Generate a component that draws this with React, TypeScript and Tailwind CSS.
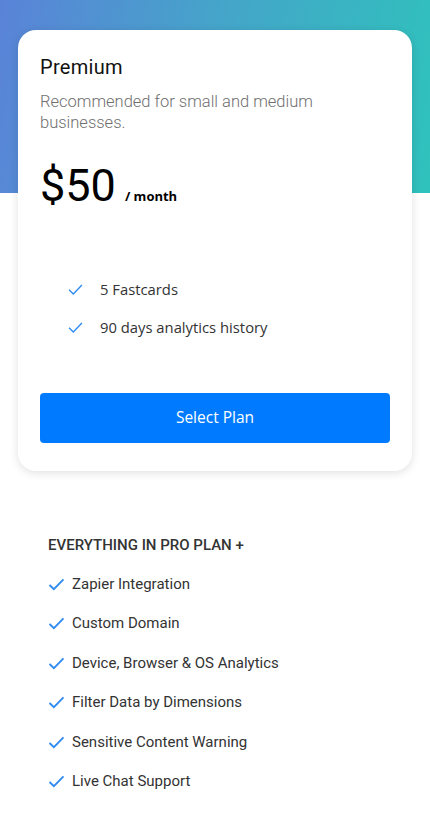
import React from "react";

const CheckThin = ({ className }: { className?: string }) => (
    <svg viewBox="0 0 16 12" className={className} fill="none">
        <path d="M1 6.2L5.6 10.8L15 1" stroke="currentColor" strokeWidth="1.5" />
    </svg>
);

const CheckBold = ({ className }: { className?: string }) => (
    <svg viewBox="0 0 18 14" className={className} fill="none">
        <path d="M1.5 7.5L6.2 12L16.5 1.5" stroke="currentColor" strokeWidth="2" />
    </svg>
);

const App = () => {
    const planFeatures = ["5 Fastcards", "90 days analytics history"];

    const extras = [
        "Zapier Integration",
        "Custom Domain",
        "Device, Browser & OS Analytics",
        "Filter Data by Dimensions",
        "Sensitive Content Warning",
        "Live Chat Support",
    ];

    return (
        <div className="min-h-[833px] w-[430px] bg-white bg-[linear-gradient(100deg,#5a83d8_0%,#44a6c9_50%,#2fc2bc_100%)] bg-no-repeat bg-[length:100%_193px] pt-[30px] font-['Roboto',sans-serif]">
            <div className="mx-[18px] rounded-[18px] bg-white px-[22px] pt-[24px] pb-[28px] shadow-[0_2px_10px_rgba(0,0,0,0.12)]">
                <h2 className="text-[20px] leading-[26px] tracking-[0.3px] text-[#111]">
                    Premium
                </h2>
                <p className="mt-[11px] text-[16.5px] font-light leading-[21px] text-[#6f6f6f]">
                    Recommended for small and medium businesses.
                </p>

                <div className="mt-[27px] flex items-baseline">
                    <span className="text-[45px] leading-[52px] text-black">
                        $50
                    </span>
                    <span className="ml-[9px] font-['Open_Sans',sans-serif] text-[13px] font-bold text-black">
                        / month
                    </span>
                </div>

                <ul className="mt-[65px] ml-[28px] flex flex-col gap-[14px] font-['Open_Sans',sans-serif] text-[14.8px] text-[#333]">
                    {planFeatures.map((f) => (
                        <li key={f} className="flex h-[24px] items-center">
                            <CheckThin className="h-[11px] w-[15px] text-[#2f8bf0]" />
                            <span className="ml-[17px]">{f}</span>
                        </li>
                    ))}
                </ul>

                <button
                    type="button"
                    className="mt-[54px] block h-[50px] w-full rounded-[4px] bg-[#007bff] font-['Open_Sans',sans-serif] text-[15.5px] text-white"
                >
                    Select Plan
                </button>
            </div>

            <div className="px-[48px] pt-[64px]">
                <h3 className="text-[15px] font-medium leading-[20px] text-[#333]">
                    EVERYTHING IN PRO PLAN +
                </h3>
                <ul className="mt-[19px] flex flex-col gap-[19.5px]">
                    {extras.map((e) => (
                        <li key={e} className="flex h-[20px] items-center text-[15px] text-[#333]">
                            <CheckBold className="h-[13px] w-[17px] text-[#2f8bf0]" />
                            <span className="ml-[7px]">{e}</span>
                        </li>
                    ))}
                </ul>
            </div>
        </div>
    );
};

export default App;
